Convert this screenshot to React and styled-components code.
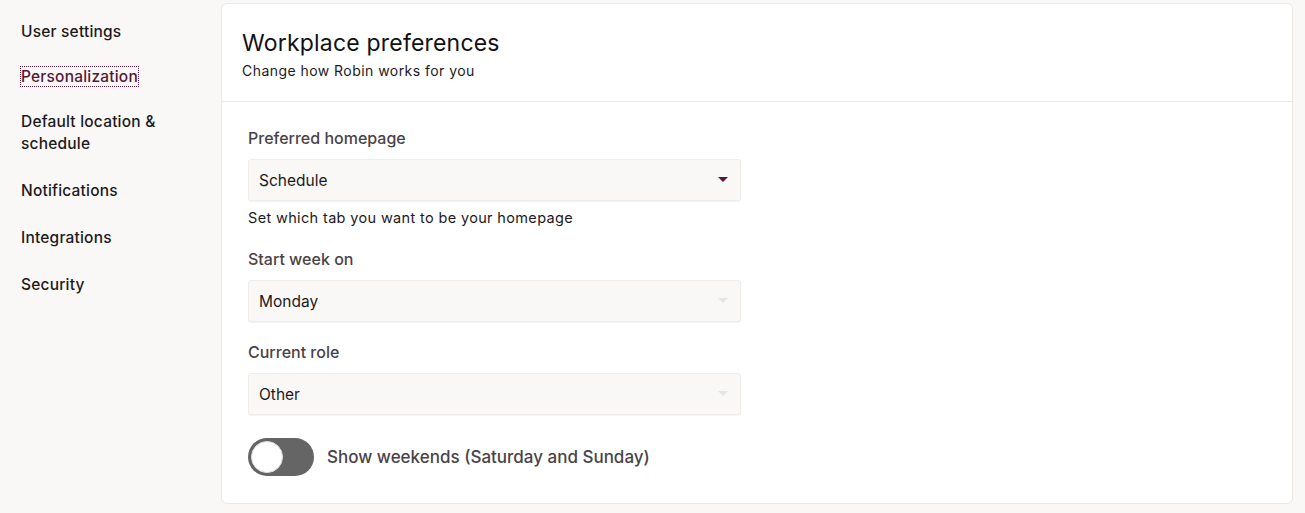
import React from 'react';
import styled, {createGlobalStyle} from 'styled-components';

const GlobalStyle = createGlobalStyle`
    html, body {
        margin: 0;
        padding: 0;
        background: #f9f8f7;
        font-family: Inter, "Open Sans", sans-serif;
        -webkit-font-smoothing: antialiased;
    }
`

const navItems = [
    {label: "User settings"},
    {label: "Personalization", active: true},
    {label: "Default location & schedule"},
    {label: "Notifications"},
    {label: "Integrations"},
    {label: "Security"}
]

const App = () => {
    return (
        <>
        <GlobalStyle />
        <Page>
            <Sidebar>
                {navItems.map((item) => (
                    <NavItem key={item.label} active={item.active}>
                        <span>{item.label}</span>
                    </NavItem>
                ))}
            </Sidebar>
            <Card>
                <CardHeader>
                    <Title>Workplace preferences</Title>
                    <Subtitle>Change how Robin works for you</Subtitle>
                </CardHeader>
                <CardBody>
                    <Field>
                        <Label>Preferred homepage</Label>
                        <Select>
                            <span>Schedule</span>
                            <Caret color="#5a1636" />
                        </Select>
                        <Help>Set which tab you want to be your homepage</Help>
                    </Field>
                    <Field>
                        <Label>Start week on</Label>
                        <Select>
                            <span>Monday</span>
                            <Caret color="#e6e3e1" />
                        </Select>
                    </Field>
                    <Field>
                        <Label>Current role</Label>
                        <Select>
                            <span>Other</span>
                            <Caret color="#e6e3e1" />
                        </Select>
                    </Field>
                    <ToggleRow>
                        <Toggle><Knob /></Toggle>
                        <ToggleLabel>Show weekends (Saturday and Sunday)</ToggleLabel>
                    </ToggleRow>
                </CardBody>
            </Card>
        </Page>
        </>
    )
}

export default App

const Page = styled.div`
    display: flex;
    align-items: flex-start;
    width: 1305px;
    height: 513px;
    box-sizing: border-box;
    padding: 3px 12px 0 0;
`

const Sidebar = styled.nav`
    width: 221px;
    flex-shrink: 0;
    box-sizing: border-box;
    padding: 18px 50px 0 21px;
    display: flex;
    flex-direction: column;
    gap: 23px;
`

const NavItem = styled.div`
    font-size: 15.5px;
    line-height: 22px;
    font-weight: 500;
    letter-spacing: 0.2px;
    color: ${({active})=>active?"#5a1636":"#1d1a1b"};
    span {
        outline: ${({active})=>active?"1px dotted #5a1636":"none"};
    }
    &:nth-child(n+4) {
        margin-top: 2px;
    }
`

const Card = styled.section`
    flex: 1;
    height: 501px;
    box-sizing: border-box;
    background: #fff;
    border: 1px solid #ebe8e5;
    border-radius: 6px;
`

const CardHeader = styled.header`
    padding: 24px 20px 21px;
    border-bottom: 1px solid #ebe8e5;
`

const Title = styled.h1`
    margin: 0;
    font-size: 23px;
    line-height: 30px;
    font-weight: 400;
    letter-spacing: 0.2px;
    color: #111;
`

const Subtitle = styled.p`
    margin: 4px 0 0;
    font-size: 14px;
    line-height: 18px;
    letter-spacing: 0.45px;
    color: #1d1a1b;
`

const CardBody = styled.div`
    padding: 25px 26px 0;
    display: flex;
    flex-direction: column;
    gap: 19px;
`

const Field = styled.div`
    width: 493px;
    display: flex;
    flex-direction: column;
`

const Label = styled.label`
    font-size: 16px;
    line-height: 22px;
    font-weight: 500;
    color: #4a4346;
    margin-bottom: 10px;
`

const Select = styled.div`
    height: 42px;
    box-sizing: border-box;
    background: #f9f8f7;
    border: 1px solid #efece9;
    border-radius: 3px;
    box-shadow: 0 1px 1px rgba(0,0,0,0.05);
    padding: 0 12px 0 10px;
    display: flex;
    align-items: center;
    justify-content: space-between;
    font-size: 15.5px;
    color: #1d1a1b;
`

const Caret = styled.i`
    width: 0;
    height: 0;
    border-left: 5px solid transparent;
    border-right: 5px solid transparent;
    border-top: 5px solid ${({color})=>color};
    margin-top: -2px;
`

const Help = styled.span`
    margin: 8px 0 2px;
    font-size: 14.5px;
    line-height: 18px;
    letter-spacing: 0.35px;
    color: #1d1a1b;
`

const ToggleRow = styled.div`
    display: flex;
    align-items: center;
    gap: 13px;
    margin-top: 4px;
`

const Toggle = styled.div`
    width: 66px;
    height: 38px;
    border-radius: 19px;
    background: #666565;
    display: flex;
    align-items: center;
    padding: 0 3px;
    box-sizing: border-box;
`

const Knob = styled.div`
    width: 32px;
    height: 32px;
    border-radius: 50%;
    background: #fff;
    border: 1px solid #ddd;
    box-sizing: border-box;
`

const ToggleLabel = styled.span`
    font-size: 17px;
    font-weight: 500;
    color: #4a4346;
`
